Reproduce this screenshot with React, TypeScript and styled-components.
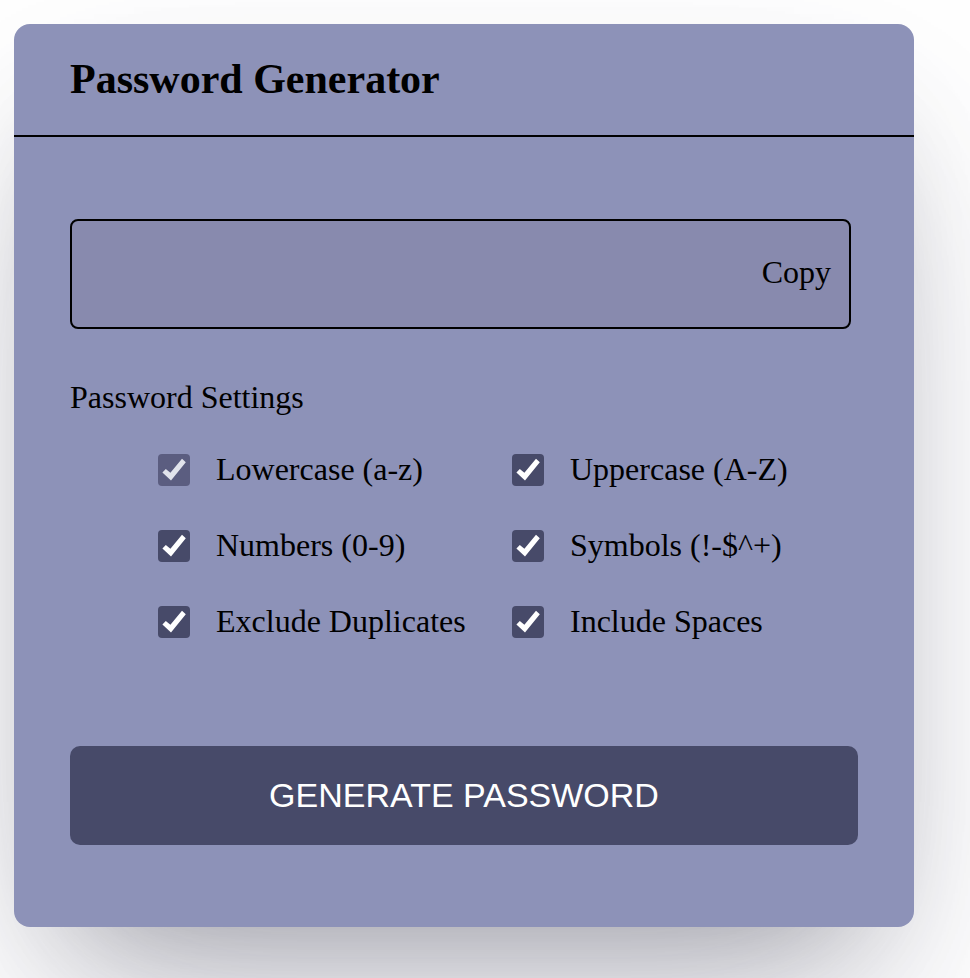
import React, { useState } from "react";
import styled, { createGlobalStyle } from "styled-components";

const GlobalStyle = createGlobalStyle`
  *, *::before, *::after { box-sizing: border-box; }
  body {
    margin: 0;
    background: #fff;
    color: #000;
    font-family: "Liberation Serif", "Times New Roman", serif;
    font-size: 32px;
  }
`;

const Page = styled.main`
  padding: 24px 56px 51px 14px;
  overflow: hidden;
`;

const Card = styled.section`
  background: #8d92b8;
  border-radius: 16px;
  box-shadow: 0 100px 200px -40px rgba(50, 50, 93, 0.25), 0 60px 120px -60px rgba(0, 0, 0, 0.3);
`;

const Header = styled.header`
  padding: 32px 56px;
  border-bottom: 2px solid #000;
`;

const Title = styled.h1`
  margin: 0;
  font-size: 42px;
  line-height: 47px;
`;

const Form = styled.form`
  padding: 82px 56px;
`;

const OutputBox = styled.div`
  display: flex;
  align-items: center;
  height: 110px;
  margin-right: 7px;
  padding: 0 18px;
  border: 2px solid #000;
  border-radius: 8px;
  background: #888aae;
`;

const Output = styled.input`
  flex: 1;
  min-width: 0;
  border: 0;
  outline: 0;
  background: transparent;
  font: inherit;
`;

const CopyButton = styled.button`
  padding: 0 0 4px;
  border: 0;
  background: transparent;
  color: inherit;
  font: inherit;
  line-height: 36px;
  cursor: pointer;
`;

const Settings = styled.fieldset`
  margin: 50px 0 0;
  padding: 0;
  border: 0;
`;

const Legend = styled.legend`
  padding: 0;
  line-height: 36px;
`;

const Options = styled.div`
  display: grid;
  grid-template-columns: 354px 1fr;
  row-gap: 40px;
  padding: 37px 0 0 88px;
`;

const Option = styled.label`
  display: flex;
  align-items: center;
  gap: 26px;
  height: 36px;
  line-height: 34px;
  white-space: nowrap;
`;

const OptionText = styled.span`
  height: 36px;
`;

const CheckWrap = styled.span`
  display: grid;
  width: 32px;
  height: 32px;

  > * { grid-area: 1 / 1; }
`;

const Checkbox = styled.input`
  appearance: none;
  width: 32px;
  height: 32px;
  margin: 0;
  border-radius: 4px;
  background: #474a69;

  &:not(:checked) { border: 2px solid #474a69; background: #fff; }
  &:not(:checked) + svg { visibility: hidden; }
  &:disabled { background: #5b5d80; }
  &:disabled + svg { color: #e1e3ec; }
`;

const Tick = styled.svg`
  width: 32px;
  height: 32px;
  color: #fff;
  pointer-events: none;
`;

const Generate = styled.button`
  display: block;
  width: 100%;
  margin-top: 106px;
  padding: 29px 16px;
  border: 0;
  border-radius: 10px;
  background: #474a69;
  color: #fff;
  font-family: "Liberation Sans", Arial, sans-serif;
  font-size: 34px;
  line-height: 41px;
  text-transform: uppercase;
  cursor: pointer;
`;

const options = [
  { id: "lowercase", label: "Lowercase (a-z)", locked: true },
  { id: "uppercase", label: "Uppercase (A-Z)" },
  { id: "numbers", label: "Numbers (0-9)" },
  { id: "symbols", label: "Symbols (!-$^+)" },
  { id: "duplicates", label: "Exclude Duplicates" },
  { id: "spaces", label: "Include Spaces" },
];

const sets: Record<string, string> = {
  lowercase: "abcdefghijklmnopqrstuvwxyz",
  uppercase: "ABCDEFGHIJKLMNOPQRSTUVWXYZ",
  numbers: "0123456789",
  symbols: "!-$^+",
  spaces: " ",
};

export default function App() {
  const [password, setPassword] = useState("");

  const generate = (event: React.FormEvent<HTMLFormElement>) => {
    event.preventDefault();
    const form = event.currentTarget;
    const on = (id: string) => (form.elements.namedItem(id) as HTMLInputElement).checked;
    let pool = Object.keys(sets).filter(on).map((id) => sets[id]).join("").split("");
    let result = "";
    while (result.length < 15 && pool.length) {
      const next = pool[Math.floor(Math.random() * pool.length)];
      result += next;
      if (on("duplicates")) pool = pool.filter((c) => c !== next);
    }
    setPassword(result);
  };

  return (
    <>
      <GlobalStyle />
      <Page>
        <Card>
          <Header>
            <Title>Password Generator</Title>
          </Header>
          <Form onSubmit={generate}>
            <OutputBox>
              <Output type="text" aria-label="Password" readOnly value={password} />
              <CopyButton type="button" onClick={() => navigator.clipboard?.writeText(password)}>
                Copy
              </CopyButton>
            </OutputBox>
            <Settings>
              <Legend>Password Settings</Legend>
              <Options>
                {options.map(({ id, label, locked }) => (
                  <Option key={id} htmlFor={id}>
                    <CheckWrap>
                      <Checkbox type="checkbox" id={id} defaultChecked disabled={locked} />
                      <Tick viewBox="0 0 32 32" aria-hidden="true">
                        <path d="M4.4 18.4 7.8 14.9 12.4 18.8 24 4.8 27.8 8.2 13 26.4Z" fill="currentColor" />
                      </Tick>
                    </CheckWrap>
                    <OptionText>{label}</OptionText>
                  </Option>
                ))}
              </Options>
            </Settings>
            <Generate type="submit">Generate Password</Generate>
          </Form>
        </Card>
      </Page>
    </>
  );
}
